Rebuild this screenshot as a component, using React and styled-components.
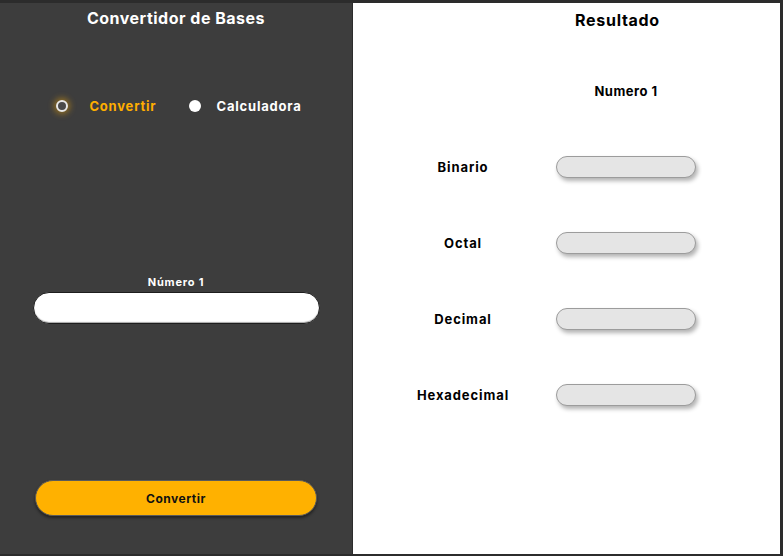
import React from "react"
import styled, { createGlobalStyle } from "styled-components"

const GlobalStyle = createGlobalStyle`
  html, body {
    margin: 0;
    padding: 0;
    background: #2c2c2c;
    font-family: "Inter", "Open Sans", sans-serif;
  }
  #root {
    padding: 3px 3px 2px 0;
    box-sizing: border-box;
    height: 556px;
  }
`

const rows = ["Binario", "Octal", "Decimal", "Hexadecimal"]

export default function App() {
  return (
    <>
      <GlobalStyle />
      <Frame>
        <LeftPanel>
          <Title>Convertidor de Bases</Title>
          <RadioRow>
            <RadioOption gap={21}>
              <Radio checked />
              <RadioLabel active>Convertir</RadioLabel>
            </RadioOption>
            <RadioOption gap={15}>
              <Radio />
              <RadioLabel>Calculadora</RadioLabel>
            </RadioOption>
          </RadioRow>
          <FieldLabel>Número 1</FieldLabel>
          <NumberInput />
          <ConvertButton>Convertir</ConvertButton>
        </LeftPanel>
        <RightPanel>
          <ResultTitle>Resultado</ResultTitle>
          <ResultGrid>
            <span />
            <ColumnHead>Numero 1</ColumnHead>
            {rows.map((r) => (
              <React.Fragment key={r}>
                <RowLabel>{r}</RowLabel>
                <ResultBox />
              </React.Fragment>
            ))}
          </ResultGrid>
        </RightPanel>
      </Frame>
    </>
  )
}

const Frame = styled.div`
  display: flex;
  height: 100%;
`
const LeftPanel = styled.div`
  width: 352px;
  background: #3d3d3d;
  display: flex;
  flex-direction: column;
  align-items: center;
  padding-top: 4px;
  box-sizing: border-box;
`
const Title = styled.h1`
  margin: 0;
  font-size: 16px;
  line-height: 22px;
  font-weight: 700;
  color: #fff;
  letter-spacing: 0.5px;
`
const RadioRow = styled.div`
  margin-top: 67px;
  margin-left: 6px;
  height: 20px;
  display: flex;
  align-items: center;
  gap: 33px;
`
const RadioOption = styled.label`
  display: flex;
  align-items: center;
  gap: ${(p) => p.gap}px;
`
const Radio = styled.span`
  width: 12px;
  height: 12px;
  border-radius: 50%;
  box-sizing: border-box;
  background: ${(p) => (p.checked ? "#4a4a4a" : "#fff")};
  border: ${(p) => (p.checked ? "2px solid #e8e8e8" : "none")};
  box-shadow: ${(p) => (p.checked ? "0 0 6px 2px rgba(255, 176, 0, 0.45)" : "none")};
`
const RadioLabel = styled.span`
  font-size: 13px;
  font-weight: 700;
  letter-spacing: 0.8px;
  color: ${(p) => (p.active ? "#ffae00" : "#fff")};
`
const FieldLabel = styled.div`
  margin-top: 159px;
  font-size: 11px;
  line-height: 14px;
  font-weight: 700;
  letter-spacing: 0.8px;
  color: #fff;
`
const NumberInput = styled.input`
  margin-top: 3px;
  width: 287px;
  height: 32px;
  box-sizing: border-box;
  border-radius: 16px;
  border: 1px solid #1e1e1e;
  background: #fff;
  box-shadow: inset 0 -1px 1px rgba(0, 0, 0, 0.35);
  outline: none;
`
const ConvertButton = styled.button`
  margin-top: 156px;
  width: 282px;
  height: 36px;
  border-radius: 18px;
  border: 1px solid #5a5a5a;
  background: #ffb100;
  box-shadow: 0 2px 3px rgba(0, 0, 0, 0.45);
  font-family: inherit;
  font-size: 12px;
  font-weight: 700;
  letter-spacing: 0.5px;
  color: #111;
`
const RightPanel = styled.div`
  flex: 1;
  background: #fff;
  margin-left: 1px;
  padding-top: 6px;
`
const ResultTitle = styled.h2`
  margin: 0 0 0 102px;
  text-align: center;
  font-size: 16px;
  line-height: 22px;
  font-weight: 700;
  letter-spacing: 0.7px;
  color: #000;
`
const ResultGrid = styled.div`
  display: grid;
  grid-template-columns: 140px 140px;
  grid-template-rows: 16px;
  column-gap: 23px;
  row-gap: 54px;
  margin: 52px 0 0 40px;
  & > :nth-child(3),
  & > :nth-child(4) {
    margin-top: 3px;
  }
`
const ColumnHead = styled.div`
  text-align: center;
  font-size: 13px;
  line-height: 16px;
  font-weight: 700;
  letter-spacing: 0.5px;
`
const RowLabel = styled.div`
  text-align: center;
  font-size: 13px;
  line-height: 22px;
  font-weight: 700;
  letter-spacing: 0.9px;
  color: #000;
`
const ResultBox = styled.div`
  height: 22px;
  box-sizing: border-box;
  border-radius: 11px;
  border: 1px solid #9c9c9c;
  background: #e5e5e5;
  box-shadow: 2px 3px 4px rgba(0, 0, 0, 0.3);
`
